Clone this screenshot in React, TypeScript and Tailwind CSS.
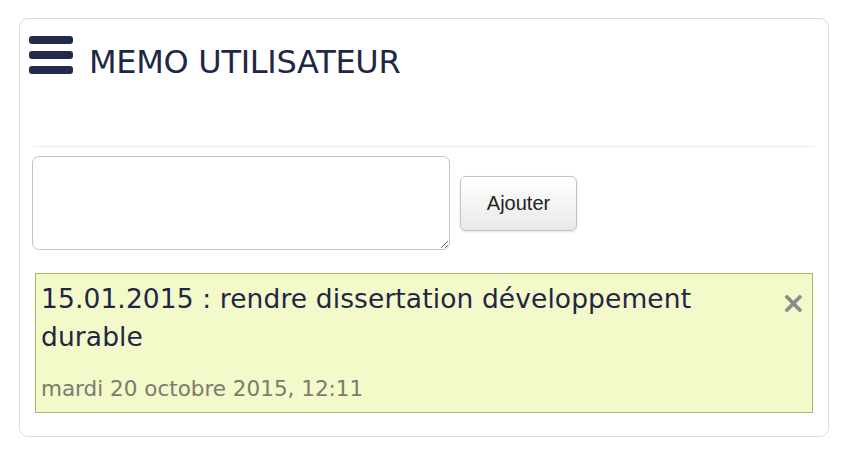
const App = () => {
  return (
    <div className="w-[848px] h-[458px] bg-white pt-[18px] pl-[19px]">
      <div className="w-[810px] h-[419px] border border-[#dcdcdc] rounded-[9px] px-[12px] pt-[16px]">
        {/* Titre */}
        <div className="flex items-start gap-[16px] -ml-[3px] text-[#1e2746]" style={{ fontFamily: '"DejaVu Sans", Verdana, sans-serif' }}>
          <div className="flex flex-col gap-[7px] w-[44px] mt-[1px]">
            <div className="h-[8px] rounded-[3px] bg-[#232b4a]" />
            <div className="h-[8px] rounded-[3px] bg-[#232b4a]" />
            <div className="h-[8px] rounded-[3px] bg-[#232b4a]" />
          </div>
          <div className="text-[32px] leading-[40px] mt-[7px] tracking-[-0.3px]">MEMO UTILISATEUR</div>
        </div>

        <div className="mt-[64px] h-px bg-[#ececec] mx-[1px]" />

        {/* Formulaire */}
        <div className="flex items-center gap-[10px] mt-[9px]">
          <textarea className="w-[418px] h-[94px] border border-[#c4c4c4] rounded-[7px] resize-y outline-none" />
          <button
            className="w-[117px] h-[55px] rounded-[6px] border border-[#c2c2c2] bg-gradient-to-b from-white to-[#e9e9e9] text-[#222] text-[20px] shadow-sm"
            style={{ fontFamily: '"Liberation Sans", Arial, sans-serif' }}
          >
            Ajouter
          </button>
        </div>

        {/* Mémo */}
        <div
          className="relative mt-[23px] mx-[3px] h-[140px] border border-[#a7b759] bg-[#f3f9c8] pl-[5px] pt-[6px] text-[#1e2746]"
          style={{ fontFamily: '"DejaVu Sans", Verdana, sans-serif' }}
        >
          <div className="text-[26.5px] leading-[38px] pr-[60px] tracking-[0.1px]">
            15.01.2015 : rendre dissertation développement durable
          </div>
          <div className="mt-[17px] text-[21.5px] text-[#7b7b72]">mardi 20 octobre 2015, 12:11</div>
          <span className="absolute right-[6px] top-[14px] text-[#8a8a8a] text-[30px] leading-none font-bold">
            ×
          </span>
        </div>
      </div>
    </div>
  );
};

export default App;
